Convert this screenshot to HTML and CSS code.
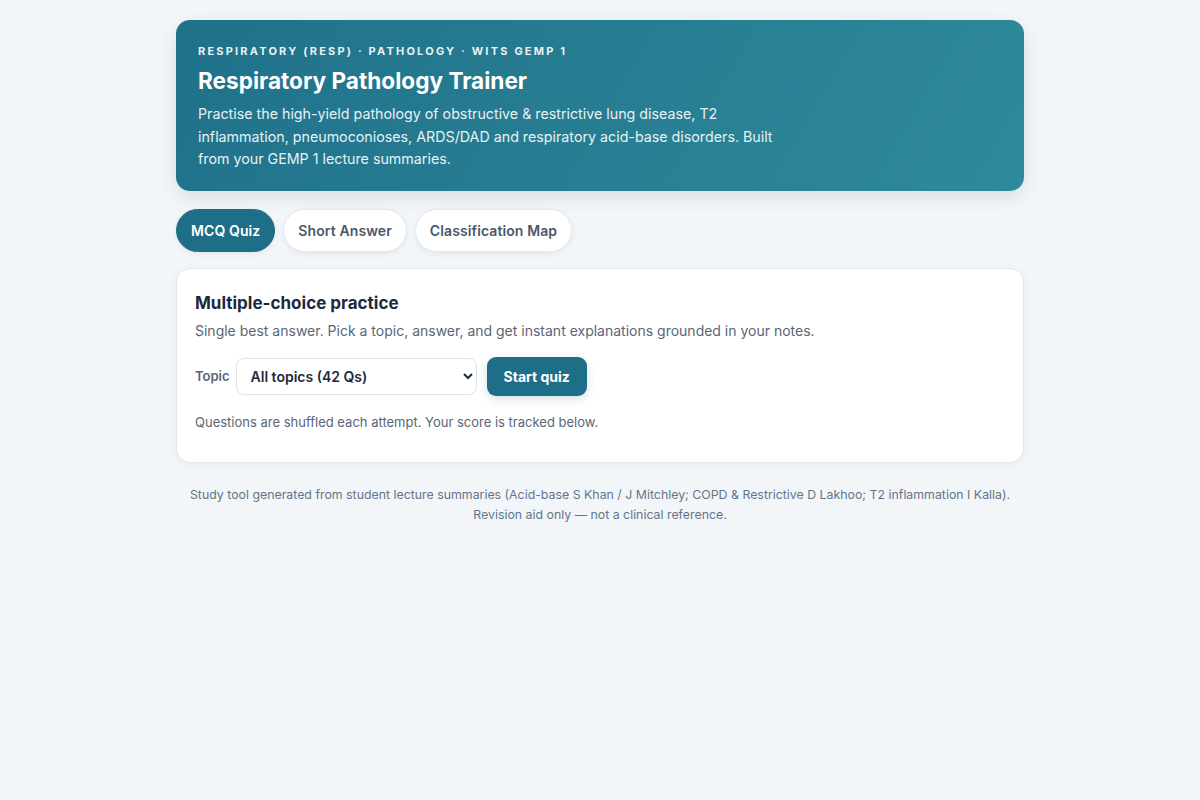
FILE: index.html
```html
<!DOCTYPE html>
<html lang="en">
<head>
    <meta charset="UTF-8">
    <meta name="viewport" content="width=device-width, initial-scale=1.0">
    <title>Respiratory Pathology Trainer</title>
    <link rel="stylesheet" href="styles.css">
</head>
<body>

    <div class="wrap">
        <header class="hero">
            <div class="eyebrow">Respiratory (RESP) · Pathology · Wits GEMP 1</div>
            <h1>Respiratory Pathology Trainer</h1>
            <p>Practise the high-yield pathology of obstructive &amp; restrictive lung disease, T2 inflammation, pneumoconioses, ARDS/DAD and respiratory acid-base disorders. Built from your GEMP 1 lecture summaries.</p>
        </header>

        <nav class="tabs">
            <button class="tab active">MCQ Quiz</button>
            <button class="tab">Short Answer</button>
            <button class="tab">Classification Map</button>
        </nav>

        <section class="card">
            <h2>Multiple-choice practice</h2>
            <p class="sub">Single best answer. Pick a topic, answer, and get instant explanations grounded in your notes.</p>

            <div class="controls">
                <label for="topic">Topic</label>
                <select id="topic">
                    <option>All topics (42 Qs)</option>
                    <option>Obstructive lung disease</option>
                    <option>Restrictive lung disease</option>
                    <option>T2 inflammation</option>
                    <option>Acid-base</option>
                </select>
                <button class="primary">Start quiz</button>
            </div>

            <p class="note">Questions are shuffled each attempt. Your score is tracked below.</p>
        </section>

        <footer class="foot">
            Study tool generated from student lecture summaries (Acid-base S Khan / J Mitchley; COPD &amp; Restrictive D Lakhoo; T2 inflammation I Kalla).<br>
            Revision aid only — not a clinical reference.
        </footer>
    </div>

</body>
</html>
```

FILE: styles.css
```css
* {
    box-sizing: border-box;
}
body {
    margin: 0;
    background: #f2f6f9;
    font-family: Inter, "Noto Sans", Arial, sans-serif;
    color: #1e293b;
}
.wrap {
    max-width: 848px;
    margin: 0 auto;
    padding: 20px 0 40px;
}
.hero {
    background: linear-gradient(120deg, #20718a 0%, #2e8a9a 100%);
    color: #fff;
    border-radius: 14px;
    padding: 24px 22px 20px;
    box-shadow: 0 6px 18px rgba(15, 60, 80, 0.12);
}
.eyebrow {
    font-size: 11px;
    font-weight: 700;
    letter-spacing: 2.2px;
    text-transform: uppercase;
    opacity: 0.9;
}
.hero h1 {
    margin: 8px 0 7px;
    font-size: 22.6px;
    font-weight: 700;
    line-height: 30px;
}
.hero p {
    margin: 0;
    max-width: 600px;
    font-size: 14.25px;
    line-height: 22.5px;
    color: #e6f2f4;
}
.tabs {
    display: flex;
    gap: 8px;
    margin: 18px 0 16px;
}
.tab {
    height: 43px;
    padding: 0 14px;
    border-radius: 22px;
    border: 1px solid #e2e8f0;
    background: #fff;
    color: #4b5768;
    font-family: inherit;
    font-size: 14px;
    font-weight: 600;
    letter-spacing: 0.1px;
    box-shadow: 0 2px 6px rgba(15, 23, 42, 0.06);
    cursor: pointer;
}
.tab.active {
    background: #1f6e87;
    border-color: #1f6e87;
    color: #fff;
}
.card {
    background: #fff;
    border: 1px solid #e2e8f0;
    border-radius: 14px;
    padding: 22px 18px 30px;
    box-shadow: 0 2px 8px rgba(15, 23, 42, 0.05);
}
.card h2 {
    margin: 0;
    font-size: 17px;
    font-weight: 700;
    line-height: 24px;
    color: #1e293b;
}
.sub {
    margin: 6px 0 16px;
    font-size: 14px;
    line-height: 20px;
    color: #5a6577;
}
.controls {
    display: flex;
    align-items: center;
    gap: 10px;
}
.controls label {
    font-size: 13px;
    font-weight: 600;
    color: #5a6577;
    margin-right: -4px;
}
select {
    width: 241px;
    height: 37px;
    padding: 0 8px 0 10px;
    border: 1px solid #dbe3ec;
    border-radius: 8px;
    background: #fff;
    font-family: inherit;
    font-size: 14px;
    font-weight: 600;
    color: #1e293b;
}
.primary {
    height: 39px;
    padding: 0 17px;
    border: none;
    border-radius: 9px;
    background: #1f6e87;
    color: #fff;
    font-family: inherit;
    font-size: 14px;
    font-weight: 700;
    box-shadow: 0 3px 8px rgba(31, 110, 135, 0.2);
    cursor: pointer;
}
.note {
    margin: 16px 0 0;
    font-size: 13px;
    line-height: 20px;
    color: #5a6577;
}
.foot {
    margin-top: 22px;
    text-align: center;
    font-size: 12.35px;
    line-height: 20px;
    color: #64748b;
}
```
